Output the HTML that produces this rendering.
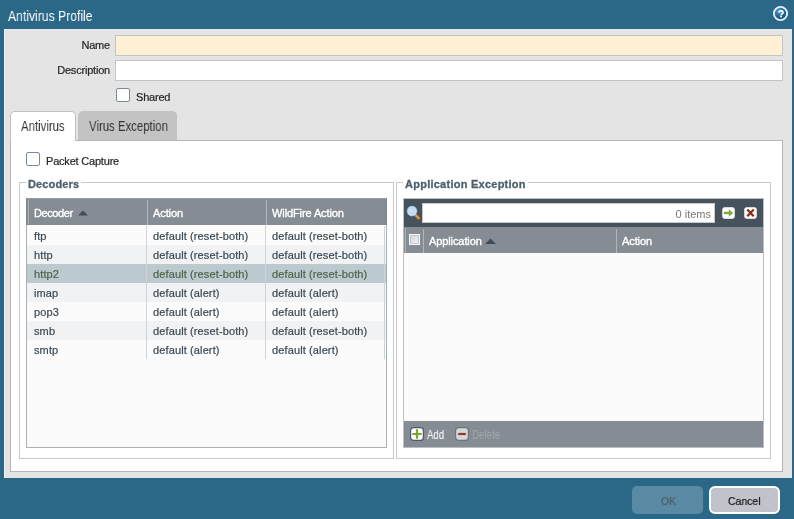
<!DOCTYPE html>
<html><head><meta charset="utf-8">
<style>
*{box-sizing:border-box;margin:0;padding:0}
html,body{width:794px;height:519px;overflow:hidden;-webkit-font-smoothing:antialiased;background:#2b6787;font-family:"Liberation Sans",sans-serif;font-size:11px;color:#333}
.a{position:absolute;will-change:transform}
.title{left:8px;top:6.5px;color:#fff;font-size:15.5px;line-height:18px;transform:scaleX(0.785);transform-origin:0 0;white-space:nowrap}
.panel{left:4px;top:29px;width:788px;height:449px;background:#e4e4e4;border-left:1px solid #f0f0f0}
.lbl{color:#242424;font-size:11px;line-height:13px;letter-spacing:-0.2px;-webkit-text-stroke:0.2px #242424;text-align:right;white-space:nowrap}
.inp{border:1px solid #c4c4c4;height:21px}
.cb{width:14px;height:14px;border:1px solid #7b8c98;border-radius:2px;background:#fff}
.tab{top:111px;height:30px;border:1px solid #c0c0c0;border-bottom:none;border-radius:5px 5px 0 0}
.tabt{font-size:14.5px;line-height:16px;transform:scaleX(0.785);transform-origin:0 0;white-space:nowrap;color:#333}
.tp{left:10px;top:140px;width:773px;height:332px;background:#fff;border:1px solid #b4b4b4}
.fs{border:1px solid #c8c8c8}
.lg{background:#fff;font-weight:bold;color:#4c6070;font-size:11px;line-height:13px;padding:0 2px;white-space:nowrap;letter-spacing:0.25px;-webkit-text-stroke:0.3px #4c6070}
.hdr{background:#858c93;color:#fff}
.row{left:27px;width:359px;height:19px}
.row span{position:absolute;top:1px;line-height:19px;white-space:nowrap;font-size:11px;letter-spacing:0.12px;-webkit-text-stroke-width:0.2px}
.hd{color:#fff !important;letter-spacing:-0.1px;-webkit-text-stroke:0.35px #fff}
.cell{font-size:11px;line-height:13px;white-space:nowrap;color:#3a4650}
</style></head><body>
<div class="a title">Antivirus Profile</div>
<svg class="a" style="left:771px;top:4px" width="19" height="19" viewBox="0 0 19 19">
<defs><radialGradient id="hg" cx="0.38" cy="0.3" r="0.75"><stop offset="0" stop-color="#5c9fcb"/><stop offset="0.55" stop-color="#1a6797"/><stop offset="1" stop-color="#0b4e7b"/></radialGradient></defs>
<circle cx="9.5" cy="9.5" r="6.6" fill="url(#hg)" stroke="#e9eff6" stroke-width="1.9"/>
<path d="M8 8.7 Q8.2 6.8 10.1 6.8 Q12 6.8 12 8.4 Q12 9.4 11 9.9 Q10.1 10.4 10.1 11.2" fill="none" stroke="#fff" stroke-width="1.7"/>
<circle cx="10" cy="12.6" r="1" fill="#fff"/>
</svg>
<div class="a panel"></div>

<div class="a lbl" style="left:40px;width:70px;top:39px">Name</div>
<div class="a inp" style="left:115px;top:35px;width:668px;background:#fdf0d5"></div>
<div class="a lbl" style="left:40px;width:70px;top:64px">Description</div>
<div class="a inp" style="left:115px;top:60px;width:668px;background:#fff"></div>
<div class="a cb" style="left:116px;top:88px"></div>
<div class="a lbl" style="left:136px;top:91px;text-align:left">Shared</div>

<div class="a tp"></div>
<div class="a tab" style="left:10px;width:66px;background:#fff"></div>
<div class="a" style="left:11px;top:139px;width:64px;height:3px;background:#fff"></div>
<div class="a tab" style="left:78px;width:99px;height:29px;background:#c3c3c3;border-color:#c3c3c3"></div>
<div class="a tabt" style="left:21px;top:118px">Antivirus</div>
<div class="a tabt" style="left:89px;top:118px">Virus Exception</div>

<div class="a cb" style="left:26px;top:152px"></div>
<div class="a lbl" style="left:46px;top:155px;text-align:left">Packet Capture</div>

<!-- Decoders fieldset -->
<div class="a fs" style="left:19px;top:182px;width:375px;height:277px"></div>
<div class="a lg" style="left:26px;top:178px;letter-spacing:0.14px">Decoders</div>
<div class="a" style="left:26px;top:198px;width:361px;height:250px;border:1px solid #a9b0b6;background:#fbfbfb"></div>
<div class="a hdr" style="left:26px;top:198px;width:361px;height:27px;border:1px solid #7c848b;border-top-color:#969da3;border-bottom:none"></div>

<div class="a cell hd" style="left:34px;top:207px;letter-spacing:-0.4px">Decoder</div>
<svg class="a" style="left:78px;top:210px" width="10" height="6"><path d="M0 5.6 L5 0.4 L10 5.6 Z" fill="#3f4d57"/></svg>
<div class="a" style="left:147px;top:200px;width:1px;height:25px;background:#b0b7bd"></div>
<div class="a" style="left:266px;top:200px;width:1px;height:25px;background:#b0b7bd"></div>
<div class="a" style="left:28px;top:200px;width:1px;height:24px;background:#aab1b7"></div>
<div class="a cell hd" style="left:153px;top:207px">Action</div>
<div class="a cell hd" style="left:272px;top:207px">WildFire Action</div>
<div class="a row" style="top:226px;background:#fbfbfb;color:#3b4852"><span style="left:7px">ftp</span><span style="left:126px">default (reset-both)</span><span style="left:245px">default (reset-both)</span></div>
<div class="a row" style="top:245px;background:#f1f2f4;color:#3b4852"><span style="left:7px">http</span><span style="left:126px">default (reset-both)</span><span style="left:245px">default (reset-both)</span></div>
<div class="a row" style="top:264px;background:#bccacf;color:#4a6446"><span style="left:7px">http2</span><span style="left:126px">default (reset-both)</span><span style="left:245px">default (reset-both)</span></div>
<div class="a row" style="top:283px;background:#f1f2f4;color:#3b4852"><span style="left:7px">imap</span><span style="left:126px">default (alert)</span><span style="left:245px">default (alert)</span></div>
<div class="a row" style="top:302px;background:#fbfbfb;color:#3b4852"><span style="left:7px">pop3</span><span style="left:126px">default (alert)</span><span style="left:245px">default (alert)</span></div>
<div class="a row" style="top:321px;background:#f1f2f4;color:#3b4852"><span style="left:7px">smb</span><span style="left:126px">default (reset-both)</span><span style="left:245px">default (reset-both)</span></div>
<div class="a row" style="top:340px;background:#fbfbfb;color:#3b4852"><span style="left:7px">smtp</span><span style="left:126px">default (alert)</span><span style="left:245px">default (alert)</span></div>
<div class="a" style="left:146px;top:226px;width:1px;height:133px;background:#cdd3d8"></div>
<div class="a" style="left:265px;top:226px;width:1px;height:133px;background:#cdd3d8"></div>
<div class="a" style="left:384px;top:226px;width:1px;height:133px;background:#cdd3d8"></div>

<!-- App exception fieldset -->
<div class="a fs" style="left:396px;top:182px;width:375px;height:277px"></div>
<div class="a lg" style="left:403px;top:178px">Application Exception</div>
<div class="a" style="left:403px;top:198px;width:361px;height:250px;border:1px solid #b9bec2;background:#fbfbfb"></div>
<div class="a" style="left:404px;top:199px;width:359px;height:28px;background:#46535c"></div>
<div class="a hdr" style="left:404px;top:227px;width:359px;height:26px"></div>
<div class="a hdr" style="left:404px;top:421px;width:359px;height:26px"></div>


<!-- right grid contents -->
<svg class="a" style="left:405px;top:203px" width="17" height="18" viewBox="0 0 17 18">
<defs><radialGradient id="mg" cx="0.45" cy="0.45" r="0.6"><stop offset="0" stop-color="#cfe3f6"/><stop offset="0.6" stop-color="#bcd8f3"/><stop offset="0.85" stop-color="#e6f1fc"/><stop offset="1" stop-color="#8db5e2"/></radialGradient></defs>
<path d="M10.6 12.1 L13.6 15.1" stroke="#8a5a2a" stroke-width="3.4" stroke-linecap="round"/>
<path d="M10.6 12.1 L13.6 15.1" stroke="#d99446" stroke-width="2.4" stroke-linecap="round"/>
<circle cx="7" cy="8.1" r="5" fill="url(#mg)" stroke="#7fa9da" stroke-width="0.6"/>
</svg>
<div class="a" style="left:422px;top:203px;width:293px;height:20px;background:#fff;border:1px solid #c8c8c8"></div>
<div class="a cell" style="left:640px;top:208px;width:71px;text-align:right;color:#777">0 items</div>
<svg class="a" style="left:722px;top:207px" width="13" height="12" viewBox="0 0 13 12">
<rect x="0.3" y="0.3" width="12.4" height="11.4" rx="3" fill="#fff" stroke="#dfe3e6" stroke-width="0.6"/>
<path d="M1.8 6 H8" stroke="#7ea83a" stroke-width="2.4"/><path d="M6.8 2.2 L11.2 6 L6.8 9.8 Z" fill="#7ea83a"/>
</svg>
<svg class="a" style="left:744px;top:207px" width="13" height="12" viewBox="0 0 13 12">
<rect x="0.3" y="0.3" width="12.4" height="11.4" rx="3" fill="#fff" stroke="#dfe3e6" stroke-width="0.6"/>
<path d="M3.3 2.6 L9.7 9.2 M9.7 2.6 L3.3 9.2" stroke="#8c2a12" stroke-width="2.2"/>
</svg>
<div class="a" style="left:405px;top:228px;width:1px;height:25px;background:#aab1b7"></div>
<div class="a" style="left:423px;top:229px;width:1px;height:24px;background:#b0b7bd"></div>
<div class="a" style="left:616px;top:229px;width:1px;height:24px;background:#b0b7bd"></div>
<div class="a" style="left:409px;top:234px;width:11px;height:11px;border:1px solid #f8f8f8;box-shadow:inset 0 0 0 1px #c3c7cb;background:linear-gradient(135deg,#d0d4d8,#f4f5f6)"></div>
<div class="a cell hd" style="left:429px;top:235px">Application</div>
<svg class="a" style="left:485px;top:238px" width="11" height="6"><path d="M0 6 L5.5 0.5 L11 6 Z" fill="#3f4d57"/></svg>
<div class="a cell hd" style="left:622px;top:235px">Action</div>

<svg class="a" style="left:410px;top:427px" width="14" height="14" viewBox="0 0 14 14">
<rect x="0.6" y="0.6" width="12.8" height="12.8" rx="3" fill="#fff" stroke="#4b5a64" stroke-width="1.2"/>
<path d="M7 2.3 V11.7 M2.3 7 H11.7" stroke="#7aa530" stroke-width="2.2"/>
</svg>
<div class="a" style="left:427px;top:428px;font-size:12px;line-height:14px;color:#fff;transform:scaleX(0.8);transform-origin:0 0">Add</div>
<svg class="a" style="left:455px;top:427px" width="14" height="14" viewBox="0 0 14 14">
<rect x="0.6" y="0.6" width="12.8" height="12.8" rx="3" fill="#d5d7d9" stroke="#6a757e" stroke-width="1.2"/>
<path d="M3.2 7 H10.8" stroke="#8a3b2e" stroke-width="2.2"/>
</svg>
<div class="a" style="left:472px;top:428px;font-size:12px;line-height:14px;color:#a3a9ae;transform:scaleX(0.81);transform-origin:0 0">Delete</div>


<!-- buttons -->
<div class="a" style="left:632px;top:486px;width:71px;height:28px;border-radius:5px;background:#5a8aa3"></div>
<div class="a" style="left:660.5px;top:493.5px;font-size:11.5px;line-height:14px;color:#4b606d;-webkit-text-stroke:0.2px #4b606d;transform:scaleX(0.9);transform-origin:0 0">OK</div>
<div class="a" style="left:709px;top:486px;width:71px;height:28px;border-radius:6px;background:#c0c3ca;border:2px solid #fff"></div>
<div class="a" style="left:728px;top:493.5px;font-size:11.5px;line-height:14px;color:#111;-webkit-text-stroke:0.2px #111;transform:scaleX(0.91);transform-origin:0 0">Cancel</div>
</body></html>
